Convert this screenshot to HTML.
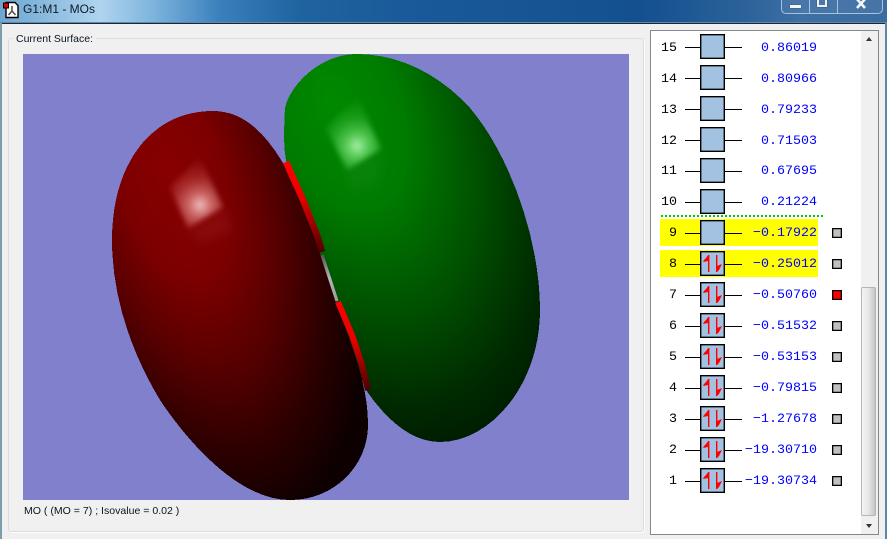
<!DOCTYPE html>
<html>
<head>
<meta charset="utf-8">
<style>
html,body{margin:0;padding:0;background:#f0f0f0;width:887px;height:539px;overflow:hidden}
#root{position:relative;width:887px;height:539px;overflow:hidden;font-family:"Liberation Sans",sans-serif;background:#f0f0f0}
.a{position:absolute}
.n{position:absolute;left:650px;width:27px;text-align:right;font:13.33px/16px "Liberation Mono",monospace;color:#000}
.v{position:absolute;left:737px;width:80px;text-align:right;font:13.33px/16px "Liberation Mono",monospace;color:#00f}
.l{position:absolute;left:685px;width:57px;height:1px;background:#000}
.b{position:absolute;left:700px;width:23px;height:23px;border:1px solid #000;background:#a3c1e0;box-shadow:inset 0 0 0 .4px #000}
.s{position:absolute;left:832px;width:8px;height:8px;border:1px solid #000;background:#c0c0c0;box-shadow:inset 0 0 0 .3px #000}
.y{position:absolute;left:660px;width:158px;height:27px;background:#ff0}
</style>
</head>
<body>
<div id="root">
<!-- title bar -->
<div class="a" style="left:0;top:0;width:887px;height:23px;background:linear-gradient(90deg,#6fa6d0 0,#86b8dc 40px,#b0d4ee 100px,#80b6de 150px,#3a80bc 220px,#1f639f 300px,#1a5a9a 400px,#14508f 640px,#2a6199 740px,#3e6fa5 800px,#3a6ba1 887px)"></div>
<div class="a" style="left:0;top:22px;width:887px;height:1px;background:#5d89b0"></div>
<div class="a" style="left:2px;top:23px;width:883px;height:1px;background:#1c2733"></div>
<div class="a" style="left:0;top:23px;width:2px;height:516px;background:#7d9dab"></div>
<div class="a" style="left:885px;top:23px;width:2px;height:516px;background:#5c86a8"></div>
<div class="a" style="left:23px;top:1px;font-size:12px;line-height:16px;color:#0c1a2a;white-space:nowrap">G1:M1 - MOs</div>
<!-- app icon -->
<svg class="a" style="left:2px;top:1px" width="18" height="18" viewBox="0 0 18 18">
<path d="M4 1.5H13L16 4.5V16.5H4Z" fill="#fff" stroke="#000" stroke-width="1.4"/>
<path d="M10 5V10M10 10L6.5 14M10 10L13.5 14" stroke="#555" stroke-width="1.6" fill="none"/>
<rect x="1.5" y="2" width="5" height="5" fill="#e00000" stroke="#000" stroke-width="1"/>
</svg>
<!-- window buttons -->
<div class="a" style="left:781px;top:-3px;width:102px;height:17px;border:1px solid #a9c3db;border-radius:0 0 5px 5px;background:rgba(255,255,255,.06);box-sizing:border-box"></div>
<div class="a" style="left:809px;top:0;width:1px;height:13px;background:#a9c3db"></div>
<div class="a" style="left:837px;top:0;width:1px;height:13px;background:#a9c3db"></div>
<div class="a" style="left:790px;top:5px;width:11px;height:3px;background:#f2f5f8;border:0;box-shadow:0 0 1px #223"></div>
<div class="a" style="left:817px;top:-2px;width:6px;height:5px;border:2px solid #eef2f6;background:#4b78a8;box-shadow:0 0 1px #223"></div>
<svg class="a" style="left:854px;top:0" width="15" height="9" viewBox="0 0 15 9"><path d="M2 -2L11 8M12 -2L3 8" stroke="#f2f5f8" stroke-width="2.6" fill="none"/></svg>
<!-- group box -->
<div class="a" style="left:8px;top:38px;width:636px;height:494px;box-sizing:border-box;border:1px solid #d9dde0;border-radius:3px;box-shadow:1px 1px 0 #fff"></div>
<div class="a" style="left:13px;top:32px;padding:0 3px;background:#f0f0f0;font-size:10.5px;line-height:14px;color:#0a1420;white-space:nowrap">Current Surface:</div>
<!-- scene -->
<svg class="a" style="left:23px;top:54px" width="606" height="446" viewBox="23 54 606 446">
<defs>
<radialGradient id="rg" gradientUnits="userSpaceOnUse" cx="0" cy="0" r="1" gradientTransform="translate(170 175) rotate(73) scale(365 170)">
<stop offset="0" stop-color="#880000"/><stop offset=".3" stop-color="#7c0000"/><stop offset=".55" stop-color="#570000"/><stop offset=".8" stop-color="#2a0000"/><stop offset="1" stop-color="#0c0000"/>
</radialGradient>
<radialGradient id="gg" gradientUnits="userSpaceOnUse" cx="0" cy="0" r="1" gradientTransform="translate(335 105) rotate(68) scale(370 215)">
<stop offset="0" stop-color="#008a00"/><stop offset=".3" stop-color="#007a00"/><stop offset=".6" stop-color="#004f00"/><stop offset=".85" stop-color="#002a00"/><stop offset="1" stop-color="#001a00"/>
</radialGradient>
<radialGradient id="hr" gradientUnits="userSpaceOnUse" cx="200" cy="205" r="44">
<stop offset="0" stop-color="#ffdcdc" stop-opacity=".9"/><stop offset=".25" stop-color="#f4a0a0" stop-opacity=".65"/><stop offset=".65" stop-color="#e06a6a" stop-opacity=".3"/><stop offset="1" stop-color="#d05050" stop-opacity=".08"/>
</radialGradient>
<radialGradient id="hg" gradientUnits="userSpaceOnUse" cx="357" cy="146" r="44">
<stop offset="0" stop-color="#c0ffc0" stop-opacity=".9"/><stop offset=".25" stop-color="#88f088" stop-opacity=".65"/><stop offset=".65" stop-color="#50d050" stop-opacity=".3"/><stop offset="1" stop-color="#40c040" stop-opacity=".08"/>
</radialGradient>
<linearGradient id="s1" gradientUnits="userSpaceOnUse" x1="287" y1="163" x2="320" y2="252"><stop offset="0" stop-color="#f00"/><stop offset=".4" stop-color="#e80000"/><stop offset="1" stop-color="#500000"/></linearGradient>
<linearGradient id="s2" gradientUnits="userSpaceOnUse" x1="338" y1="302" x2="368" y2="390"><stop offset="0" stop-color="#f00"/><stop offset=".45" stop-color="#e80000"/><stop offset="1" stop-color="#4a0000"/></linearGradient>
<linearGradient id="s3" gradientUnits="userSpaceOnUse" x1="322" y1="255" x2="337" y2="302"><stop offset="0" stop-color="#555"/><stop offset=".5" stop-color="#b5b5b5"/><stop offset="1" stop-color="#999"/></linearGradient>
<filter id="bl" x="-30%" y="-30%" width="160%" height="160%"><feGaussianBlur stdDeviation="2.6"/></filter>
<filter id="bl2" x="-50%" y="-50%" width="200%" height="200%"><feGaussianBlur stdDeviation="5"/></filter>
</defs>
<rect x="23" y="54" width="606" height="446" fill="#8080cc"/>
<path fill="url(#gg)" shape-rendering="crispEdges" d="M357 54C400 54 440 75 470 108C510 155 540 240 540 310C540 385 490 442 440 442C415 442 390 425 366 390L340 320L300 200L287 165C283 150 284 125 285 108C290 85 320 54 357 54Z"/>
<polygon fill="#1a8a1a" opacity=".3" filter="url(#bl2)" points="345,168 384,152 378,185 350,192"/>
<polygon fill="url(#hg)" filter="url(#bl)" points="358,97 381,149 347,170 326,128"/>
<path fill="url(#rg)" shape-rendering="crispEdges" d="M213 111C240 111 262 128 283 163C295 185 310 225 320 253C330 285 340 315 350 340C360 370 368 395 368 425C368 465 335 500 290 500C240 500 190 445 160 400C130 350 112 295 112 240C112 165 150 111 213 111Z"/>
<polygon fill="#a02020" opacity=".3" filter="url(#bl2)" points="190,228 226,208 232,232 198,244"/>
<polygon fill="url(#hr)" filter="url(#bl)" points="200,157 223,207 188,228 170,187"/>
<path d="M286 162L303 200L318 238L322 252" stroke="url(#s1)" stroke-width="6.5" fill="none"/>
<path d="M322 255L337 301" stroke="url(#s3)" stroke-width="3.2" fill="none"/>
<path d="M338 302L352 335L362 365L368 390" stroke="url(#s2)" stroke-width="6" fill="none"/>
</svg>
<div class="a" style="left:24px;top:504px;font-size:10.55px;line-height:15px;color:#0a1420;white-space:nowrap">MO ( (MO = 7) ; Isovalue = 0.02 )</div>
<!-- list box -->
<div class="a" style="left:650px;top:30px;width:229px;height:505px;box-sizing:border-box;border:1px solid #828790;background:#fff"></div>
<!-- scrollbar -->
<div class="a" style="left:861px;top:31px;width:17px;height:503px;background:#f0f0f0"></div>
<div class="a" style="left:861px;top:287px;width:15px;height:229px;box-sizing:border-box;border:1px solid #b5b5b5;border-radius:2px;background:linear-gradient(90deg,#f4f4f4,#e6e6e6 50%,#c6c6c6)"></div>
<div class="a" style="left:866px;top:37px;width:0;height:0;border-left:3.5px solid transparent;border-right:3.5px solid transparent;border-bottom:4px solid #333"></div>
<div class="a" style="left:866px;top:524px;width:0;height:0;border-left:3.5px solid transparent;border-right:3.5px solid transparent;border-top:4px solid #333"></div>
<!-- highlights -->
<div class="y" style="top:219px"></div>
<div class="y" style="top:250px"></div>
<svg class="a" style="left:660px;top:215px" width="163" height="2"><line x1="1" y1="1" x2="163" y2="1" stroke="#0c0" stroke-width="2" stroke-dasharray="2 2"/></svg>
<!-- rows -->
<div class="l" style="top:47px"></div><div class="b" style="top:34px"></div><div class="n" style="top:41px">15</div><div class="v" style="top:41px">0.86019</div>
<div class="l" style="top:78px"></div><div class="b" style="top:65px"></div><div class="n" style="top:72px">14</div><div class="v" style="top:72px">0.80966</div>
<div class="l" style="top:109px"></div><div class="b" style="top:96px"></div><div class="n" style="top:103px">13</div><div class="v" style="top:103px">0.79233</div>
<div class="l" style="top:140px"></div><div class="b" style="top:127px"></div><div class="n" style="top:134px">12</div><div class="v" style="top:134px">0.71503</div>
<div class="l" style="top:171px"></div><div class="b" style="top:158px"></div><div class="n" style="top:164px">11</div><div class="v" style="top:164px">0.67695</div>
<div class="l" style="top:202px"></div><div class="b" style="top:189px"></div><div class="n" style="top:195px">10</div><div class="v" style="top:195px">0.21224</div>
<div class="l" style="top:233px"></div><div class="b" style="top:220px"></div><div class="n" style="top:226px">9</div><div class="v" style="top:226px">−0.17922</div><div class="s" style="top:228px"></div>
<div class="l" style="top:264px"></div><div class="b" style="top:251px"><svg width="23" height="23"><use href="#ar"/></svg></div><div class="n" style="top:257px">8</div><div class="v" style="top:257px">−0.25012</div><div class="s" style="top:259px"></div>
<div class="l" style="top:295px"></div><div class="b" style="top:282px"><svg width="23" height="23"><use href="#ar"/></svg></div><div class="n" style="top:288px">7</div><div class="v" style="top:288px">−0.50760</div><div class="s" style="top:290px;background:#f00"></div>
<div class="l" style="top:326px"></div><div class="b" style="top:313px"><svg width="23" height="23"><use href="#ar"/></svg></div><div class="n" style="top:319px">6</div><div class="v" style="top:319px">−0.51532</div><div class="s" style="top:321px"></div>
<div class="l" style="top:357px"></div><div class="b" style="top:344px"><svg width="23" height="23"><use href="#ar"/></svg></div><div class="n" style="top:350px">5</div><div class="v" style="top:350px">−0.53153</div><div class="s" style="top:352px"></div>
<div class="l" style="top:388px"></div><div class="b" style="top:375px"><svg width="23" height="23"><use href="#ar"/></svg></div><div class="n" style="top:381px">4</div><div class="v" style="top:381px">−0.79815</div><div class="s" style="top:383px"></div>
<div class="l" style="top:419px"></div><div class="b" style="top:406px"><svg width="23" height="23"><use href="#ar"/></svg></div><div class="n" style="top:412px">3</div><div class="v" style="top:412px">−1.27678</div><div class="s" style="top:414px"></div>
<div class="l" style="top:450px"></div><div class="b" style="top:437px"><svg width="23" height="23"><use href="#ar"/></svg></div><div class="n" style="top:443px">2</div><div class="v" style="top:443px">−19.30710</div><div class="s" style="top:445px"></div>
<div class="l" style="top:481px"></div><div class="b" style="top:468px"><svg width="23" height="23"><use href="#ar"/></svg></div><div class="n" style="top:474px">1</div><div class="v" style="top:474px">−19.30734</div><div class="s" style="top:476px"></div>
<svg width="0" height="0" style="position:absolute"><defs><g id="ar" fill="#f00"><rect x="7" y="3" width="1.4" height="17"/><polygon points="7.2,3 7.2,9 2,10 3,8 5,6"/><rect x="15" y="3" width="1.4" height="17"/><polygon points="16,20 16,14 21,12 20,14 18,18"/></g></defs></svg>
</div>
</body>
</html>
